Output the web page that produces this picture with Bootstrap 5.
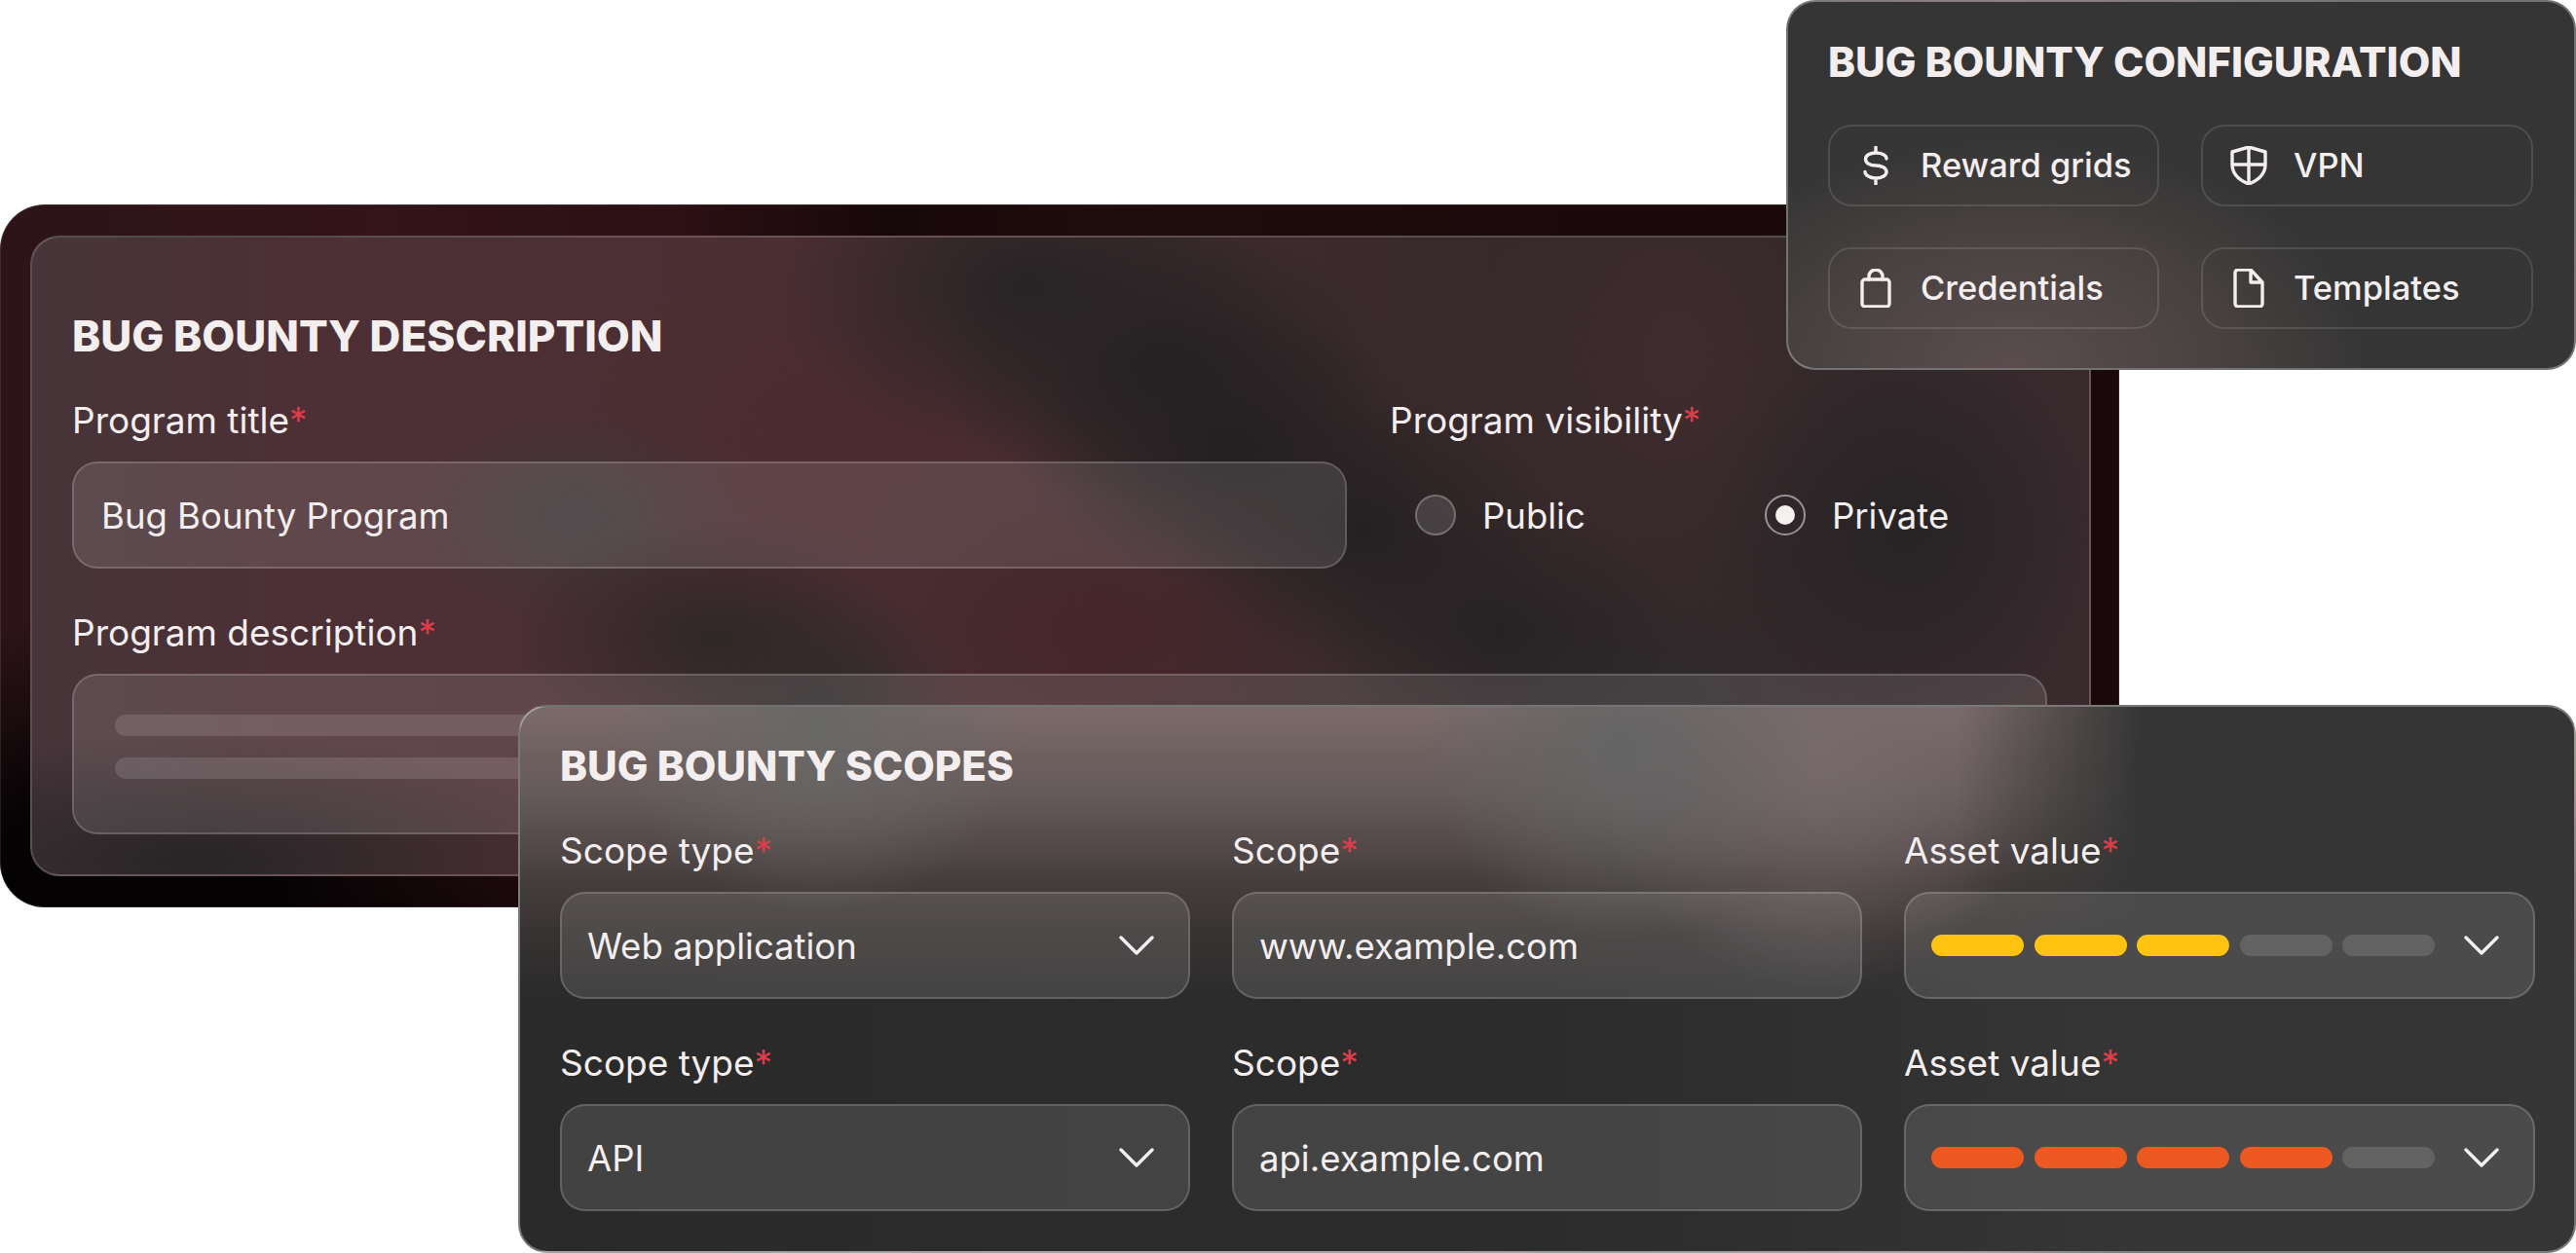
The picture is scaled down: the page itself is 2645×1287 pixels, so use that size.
<!DOCTYPE html>
<html lang="en">
<head>
  <meta charset="UTF-8" />
  <meta name="viewport" content="width=device-width, initial-scale=1.0" />
  <title>Bug Bounty</title>
  <link href="https://cdn.jsdelivr.net/npm/bootstrap@5.3.3/dist/css/bootstrap.min.css" rel="stylesheet" />
  <style>
    body {
      margin: 0;
      background-color: #fff;
      font-family: "Inter", "Liberation Sans", sans-serif;
      color: #f4eeee;
    }
    .stage {
      position: relative;
      width: 2645px;
      height: 1287px;
      overflow: hidden;
    }
    .win {
      position: absolute;
    }
    .win-desc {
      left: 0;
      top: 210px;
      width: 2176px;
      height: 722px;
      padding: 32px 29px 32px 31px;
      border-radius: 46px;
      background:
        radial-gradient(ellipse 420px 300px at 130px 100%, #040203 35%, transparent),
        linear-gradient(180deg, transparent 75%, rgba(12, 3, 5, .6) 100%),
        linear-gradient(90deg, #2c1418 0, #331418 18%, #2c1014 32%, #170809 42%, #1f0c0c 52%, #1b090b 75%, #1a090b 100%);
      box-shadow: inset 0 0 0 1px rgba(255, 255, 255, .1);
    }
    .pane-desc {
      height: 100%;
      padding: 76px 43px 0 41px;
      border-radius: 30px;
      border: 2px solid rgba(255, 255, 255, .17);
      background:
        radial-gradient(ellipse 260px 170px at 1020px 50px, #272425, transparent),
        radial-gradient(ellipse 230px 150px at 1159px 128px, #242122, transparent),
        radial-gradient(ellipse 210px 140px at 1229px 214px, #232021, transparent),
        radial-gradient(ellipse 200px 140px at 1367px 301px, #242122, transparent),
        radial-gradient(ellipse 190px 130px at 1507px 404px, #262324, transparent),
        radial-gradient(ellipse 210px 210px at 1927px 301px, #272425, transparent),
        radial-gradient(ellipse 210px 120px at 700px 410px, #2f2728, transparent),
        radial-gradient(ellipse 170px 110px at 557px 286px, #3d3738, transparent),
        radial-gradient(ellipse 160px 120px at 807px 476px, #2f2c2c, transparent),
        radial-gradient(ellipse 190px 120px at 1650px 476px, #2c2a2b, transparent),
        radial-gradient(ellipse 420px 130px at 170px 640px, #272526, transparent),
        radial-gradient(ellipse 240px 130px at 1087px 404px, #47262a, transparent),
        radial-gradient(ellipse 320px 190px at 867px 206px, #4b2b2f, transparent),
        radial-gradient(ellipse 200px 260px at 1690px 120px, #3f2c2f, transparent),
        linear-gradient(90deg, #46353a 0, #4c3035 12%, #4b2e32 40%, #3a2a2c 65%, #33282a 85%, #3a2a2e 100%);
    }
    .win-scopes {
      left: 532px;
      top: 724px;
      width: 2113px;
      height: 563px;
      padding: 36px 42px 0 41px;
      border-radius: 30px;
      border: 2px solid rgba(255, 255, 255, .34);
      background:
        linear-gradient(90deg, transparent 70%, #353535 79%),
        radial-gradient(ellipse 210px 190px at 306px 20px, #686866, transparent),
        radial-gradient(ellipse 200px 200px at 1129px 40px, #656565, transparent),
        radial-gradient(ellipse 240px 260px at 1334px 30px, #776a6c, transparent),
        linear-gradient(180deg, #7c6b6b 0, #6f6060 50px, #655a5a 90px, #544a4a 140px, #453d3d 180px, #383333 230px, rgba(44, 44, 44, 0) 300px),
        linear-gradient(90deg, #2a2a2a, #2c2c2c 50%, #353535 80%);
    }
    .win-config {
      left: 1834px;
      top: 0;
      width: 811px;
      height: 380px;
      padding: 37px 44px 0 41px;
      border-radius: 30px;
      border: 2px solid rgba(255, 255, 255, .3);
      background:
        radial-gradient(ellipse 370px 240px at 230px 100%, #5b4d4d 0, rgba(91, 77, 77, .55) 55%, transparent 100%),
        #353535;
    }
    .head {
      font-size: 42.2px;
      line-height: 50px;
      font-weight: 800;
      margin: 0;
    }
    .head-big {
      font-size: 44px;
    }
    .fld-label {
      font-size: 37px;
      line-height: 44px;
      margin: 0 0 20px;
    }
    .fld-label span {
      color: #dc3d4b;
    }
    .box {
      height: 110px;
      padding: 0 35px 0 26px;
      font-size: 36.5px;
      border-radius: 26px;
      border: 2px solid rgba(255, 255, 255, .17);
      background-color: rgba(255, 255, 255, .115);
    }
    .box-desc {
      padding-left: 28px;
    }
    .val-text {
      padding-top: 3px;
    }
    .fld-wide {
      width: 1309px;
    }
    .fld-rest {
      width: 675px;
    }
    .radio-dot {
      width: 42px;
      height: 42px;
      border-radius: 50%;
      flex: none;
      border: 2px solid rgba(255, 255, 255, .25);
      background-color: rgba(255, 255, 255, .13);
    }
    .radio-dot.on {
      background-color: transparent;
      border-color: rgba(255, 255, 255, .5);
    }
    .radio-dot.on::after {
      content: "";
      width: 20px;
      height: 20px;
      border-radius: 50%;
      background-color: #f4f0f0;
    }
    .radio-row {
      font-size: 36.5px;
      height: 110px;
      padding-left: 26px;
    }
    .radio-item {
      flex: none;
      width: 359px;
      gap: 27px;
    }
    .fake-lines {
      height: 165px;
      padding: 40px 42px;
      gap: 22px;
    }
    .fake-lines i {
      display: block;
      height: 22px;
      border-radius: 11px;
      background-color: rgba(255, 255, 255, .13);
    }
    .scope-grid {
      display: grid;
      grid-template-columns: 647px 647px 648px;
      column-gap: 43px;
      row-gap: 44px;
      margin-top: 40px;
    }
    .config-grid {
      display: grid;
      grid-template-columns: 340px 341px;
      gap: 42px 43px;
      margin-top: 39px;
    }
    .cfg-cell {
      height: 84px;
      padding-left: 27px;
      gap: 26px;
      font-size: 34.5px;
      font-weight: 500;
      border-radius: 24px;
      border: 2px solid rgba(255, 255, 255, .12);
    }
    .cfg-cell svg {
      width: 40px;
      height: 40px;
      fill: none;
      stroke: #f4eeee;
      stroke-width: 3.4;
      stroke-linecap: round;
      stroke-linejoin: round;
      flex: none;
    }
    .chev {
      width: 36px;
      height: 20px;
      fill: none;
      stroke: #f2f0f0;
      stroke-width: 3.4;
      stroke-linecap: round;
      stroke-linejoin: round;
      flex: none;
    }
    .lvl {
      gap: 10.500px;
    }
    .lvl i {
      display: block;
      width: 95px;
      height: 22px;
      border-radius: 11px;
      background-color: #636363;
    }
    .lvl i.y { background-color: #ffc310; }
    .lvl i.o { background-color: #ec5a22; }
    .gap-top-title { margin-top: 40px; }
    .gap-top-field { margin-top: 44px; }
  </style>
</head>
<body>
  <div class="stage">

    <section class="win win-desc">
      <div class="pane-desc">
        <h2 class="head head-big">BUG BOUNTY DESCRIPTION</h2>
        <div class="d-flex gap-top-title justify-content-between">
          <div class="fld-wide">
            <p class="fld-label">Program title<span>*</span></p>
            <div class="box box-desc d-flex align-items-center"><span class="val-text">Bug Bounty Program</span></div>
          </div>
          <div class="fld-rest">
            <p class="fld-label">Program visibility<span>*</span></p>
            <div class="radio-row d-flex align-items-center">
              <div class="radio-item d-flex align-items-center">
                <span class="radio-dot"></span><span class="val-text">Public</span>
              </div>
              <div class="radio-item d-flex align-items-center">
                <span class="radio-dot on d-flex align-items-center justify-content-center"></span><span class="val-text">Private</span>
              </div>
            </div>
          </div>
        </div>
        <div class="gap-top-field">
          <p class="fld-label">Program description<span>*</span></p>
          <div class="box fake-lines d-flex flex-column">
            <i></i>
            <i></i>
          </div>
        </div>
      </div>
    </section>

    <section class="win win-config">
      <h2 class="head">BUG BOUNTY CONFIGURATION</h2>
      <div class="config-grid">
        <div class="cfg-cell d-flex align-items-center">
          <svg viewBox="0 0 40 40"><path d="M20 1v6M20 33v6M31 13c0-3.500-4.500-6-11-6-6 0-10.500 2.500-10.500 6.500s4.500 6.500 10.500 6.500 11 2.500 11 6.500-5 6.500-11 6.500-11-3-11-6.500"/></svg>
          Reward grids
        </div>
        <div class="cfg-cell d-flex align-items-center">
          <svg viewBox="0 0 40 40"><path d="M3 6 20 1l17 5v13c0 9-7 16-17 20C10 35 3 28 3 19ZM20 1v38M3 19h34"/></svg>
          VPN
        </div>
        <div class="cfg-cell d-flex align-items-center">
          <svg viewBox="0 0 40 40"><rect x="6" y="11" width="28" height="28" rx="3"/><path d="M13 11V8a7 7 0 0 1 14 0v3"/></svg>
          Credentials
        </div>
        <div class="cfg-cell d-flex align-items-center">
          <svg viewBox="0 0 40 40"><path d="M9 1h13l12 13v22a3 3 0 0 1-3 3H9a3 3 0 0 1-3-3V4a3 3 0 0 1 3-3ZM22 1v13h12"/></svg>
          Templates
        </div>
      </div>
    </section>

    <section class="win win-scopes">
      <h2 class="head">BUG BOUNTY SCOPES</h2>
      <div class="scope-grid">
        <div>
          <p class="fld-label">Scope type<span>*</span></p>
          <div class="box d-flex align-items-center justify-content-between">
            <span class="val-text">Web application</span>
            <svg class="chev" viewBox="0 0 36 20"><path d="M2 2l16 16L34 2"/></svg>
          </div>
        </div>
        <div>
          <p class="fld-label">Scope<span>*</span></p>
          <div class="box d-flex align-items-center"><span class="val-text">www.example.com</span></div>
        </div>
        <div>
          <p class="fld-label">Asset value<span>*</span></p>
          <div class="box d-flex align-items-center justify-content-between">
            <div class="lvl d-flex"><i class="y"></i><i class="y"></i><i class="y"></i><i></i><i></i></div>
            <svg class="chev" viewBox="0 0 36 20"><path d="M2 2l16 16L34 2"/></svg>
          </div>
        </div>
        <div>
          <p class="fld-label">Scope type<span>*</span></p>
          <div class="box d-flex align-items-center justify-content-between">
            <span class="val-text">API</span>
            <svg class="chev" viewBox="0 0 36 20"><path d="M2 2l16 16L34 2"/></svg>
          </div>
        </div>
        <div>
          <p class="fld-label">Scope<span>*</span></p>
          <div class="box d-flex align-items-center"><span class="val-text">api.example.com</span></div>
        </div>
        <div>
          <p class="fld-label">Asset value<span>*</span></p>
          <div class="box d-flex align-items-center justify-content-between">
            <div class="lvl d-flex"><i class="o"></i><i class="o"></i><i class="o"></i><i class="o"></i><i></i></div>
            <svg class="chev" viewBox="0 0 36 20"><path d="M2 2l16 16L34 2"/></svg>
          </div>
        </div>
      </div>
    </section>

  </div>
  <script src="https://cdn.jsdelivr.net/npm/bootstrap@5.3.3/dist/js/bootstrap.bundle.min.js"></script>
</body>
</html>
